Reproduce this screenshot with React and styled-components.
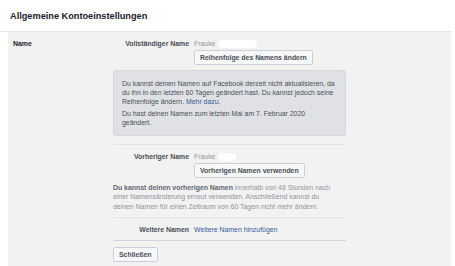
import React from 'react';
import styled, { createGlobalStyle } from 'styled-components';

const GlobalStyle = createGlobalStyle`
  html, body {
    margin: 0;
    padding: 0;
    background: #ffffff;
    font-family: "Liberation Sans", Arial, Helvetica, sans-serif;
    -webkit-font-smoothing: antialiased;
  }
`;

const Page = styled.div`
  width: 455px;
  height: 266px;
  overflow: hidden;
`;

const Title = styled.h2`
  margin: 0 4px 0 0;
  padding: 11px 10px 0 10px;
  height: 20px;
  font-size: 9.2px;
  line-height: 11px;
  font-weight: bold;
  color: #1d2129;
  border-bottom: 1px solid #e5e6e9;
`;

const Panel = styled.div`
  display: flex;
  margin: 0 4px 0 8px;
  padding: 7px 0 0 5px;
  height: 240px;
  background: #f2f2f2;
  font-size: 6.9px;
  line-height: 9px;
`;

const SectionLabel = styled.div`
  width: 100px;
  flex-shrink: 0;
  font-weight: bold;
  color: #1d2129;
`;

const Content = styled.div`
  width: 233px;
  display: flex;
  flex-direction: column;
`;

const Field = styled.div`
  display: grid;
  grid-template-columns: 76px 1fr;
  column-gap: 5px;
  row-gap: 2px;
`;

const FieldLabel = styled.div`
  text-align: right;
  font-weight: bold;
  color: #4b4f56;
  white-space: nowrap;
`;

const FieldValue = styled.div`
  color: #90949c;
  display: flex;
  align-items: center;
`;

const Redacted = styled.span`
  display: inline-block;
  width: ${p => p.$w}px;
  height: 8px;
  margin-left: 3px;
  background: #ffffff;
  border-radius: 4px;
  filter: blur(0.6px);
`;

const Button = styled.button`
  grid-column: ${p => (p.$inField ? '2' : 'auto')};
  justify-self: start;
  align-self: start;
  height: 15px;
  padding: 0 5px;
  border: 1px solid #ccd0d5;
  border-radius: 2px;
  background: #f6f7f9;
  color: #4b4f56;
  font-family: inherit;
  font-size: 6.9px;
  font-weight: bold;
  line-height: 13px;
  white-space: nowrap;
  cursor: pointer;
`;

const InfoBox = styled.div`
  margin-top: 5px;
  padding: 8px;
  background: #dfe1e5;
  border: 1px solid #d3d6db;
  border-radius: 3px;
  color: #4b4f56;
  white-space: nowrap;

  p {
    margin: 0;
  }
  p + p {
    margin-top: 3px;
  }
`;

const Link = styled.a`
  color: #365899;
  text-decoration: none;
  cursor: pointer;
`;

const Divider = styled.div`
  height: 1px;
  background: ${p => (p.$strong ? '#d3d6db' : '#e3e4e7')};
  margin: ${p => p.$space || '7px 0'};
`;

const Note = styled.p`
  margin: 5px 0 0 0;
  color: #90949c;
  line-height: 9.3px;
  white-space: nowrap;

  strong {
    color: #606770;
  }
`;

const Footer = styled.div`
  display: flex;
`;

export default function App() {
  return (
    <Page>
      <GlobalStyle />
      <Title>Allgemeine Kontoeinstellungen</Title>
      <Panel>
        <SectionLabel>Name</SectionLabel>
        <Content>
          <Field>
            <FieldLabel>Vollständiger Name</FieldLabel>
            <FieldValue>
              Frauke <Redacted $w={39} />
            </FieldValue>
            <Button $inField>Reihenfolge des Namens ändern</Button>
          </Field>

          <InfoBox>
            <p>
              Du kannst deinen Namen auf Facebook derzeit nicht aktualisieren, da<br />
              du ihn in den letzten 60 Tagen geändert hast. Du kannst jedoch seine<br />
              Reihenfolge ändern. <Link>Mehr dazu.</Link>
            </p>
            <p>
              Du hast deinen Namen zum letzten Mal am 7. Februar 2020<br />
              geändert.
            </p>
          </InfoBox>

          <Divider $space="8px 0 7px 0" />

          <Field>
            <FieldLabel>Vorheriger Name</FieldLabel>
            <FieldValue>
              Frauke <Redacted $w={18} />
            </FieldValue>
            <Button $inField>Vorherigen Namen verwenden</Button>
          </Field>

          <Note>
            <strong>Du kannst deinen vorherigen Namen</strong> innerhalb von 48 Stunden nach<br />
            einer Namensänderung erneut verwenden. Anschließend kannst du<br />
            deinen Namen für einen Zeitraum von 60 Tagen nicht mehr ändern.
          </Note>

          <Divider $space="6px 0 7px 0" />

          <Field>
            <FieldLabel>Weitere Namen</FieldLabel>
            <FieldValue>
              <Link>Weitere Namen hinzufügen</Link>
            </FieldValue>
          </Field>

          <Divider $strong $space="6px 0 6px 0" />

          <Footer>
            <Button>Schließen</Button>
          </Footer>
        </Content>
      </Panel>
    </Page>
  );
}
